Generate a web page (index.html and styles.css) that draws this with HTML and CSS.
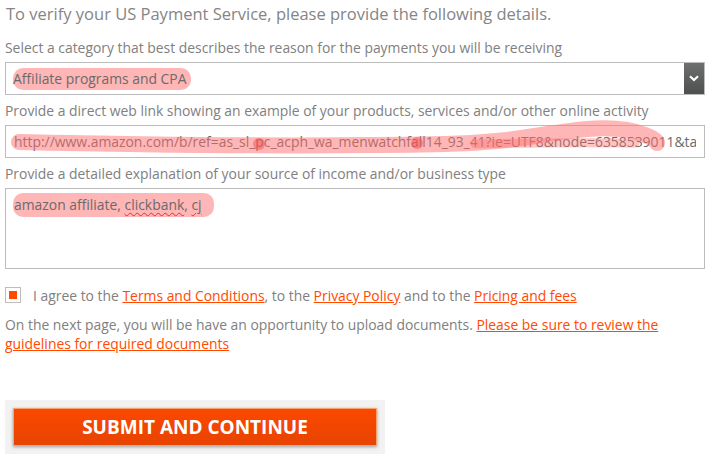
FILE: index.html
```html
<!DOCTYPE html>
<html>
<head>
<meta charset="utf-8">
<link rel="stylesheet" href="styles.css">
</head>
<body>
<div class="page">
  <h1 class="title">To verify your US Payment Service, please provide the following details.</h1>

  <div class="label l1">Select a category that best describes the reason for the payments you will be receiving</div>
  <div class="field select">
    <span class="value"><span class="mark">Affiliate programs and CPA</span></span>
    <span class="arrow">
      <svg width="10" height="7" viewBox="0 0 10 7"><path d="M1 1.2 L5 5 L9 1.2" fill="none" stroke="#fff" stroke-width="2.2"/></svg>
    </span>
  </div>

  <div class="label l2">Provide a direct web link showing an example of your products, services and/or other online activity</div>
  <div class="field url">
    <span class="clip"><span class="value">http://www.amazon.com/b/ref=as_sl_pc_acph_wa_menwatchfall14_93_41?ie=UTF8&amp;node=6358539011&amp;ta</span></span>
    <svg class="scribble" width="700" height="44" viewBox="0 -10 700 44">
      <path d="M14 17 C 150 20, 300 22, 440 19 C 500 18, 530 10, 565 6 C 600 1, 625 4, 640 10 C 648 13, 652 16, 652 18" fill="none" stroke="rgba(255,110,110,0.5)" stroke-width="16" stroke-linecap="round"/>
      <path d="M470 19 C 520 18, 560 17, 630 18" fill="none" stroke="rgba(255,110,110,0.4)" stroke-width="9" stroke-linecap="round"/>
      <circle cx="254" cy="19" r="6" fill="rgba(240,70,70,0.45)"/>
      <circle cx="412" cy="18" r="6" fill="rgba(240,70,70,0.45)"/>
    </svg>
  </div>

  <div class="label l3">Provide a detailed explanation of your source of income and/or business type</div>
  <div class="field area">
    <span class="value"><span class="mark mark2">amazon affiliate, <span class="spell">clickbank</span>, <span class="spell">cj</span></span></span>
  </div>

  <div class="agree">
    <span class="check"><span class="tick"></span></span>
    <span class="agree-text">I agree to the <a>Terms and Conditions</a>, to the <a>Privacy Policy</a> and to the <a>Pricing and fees</a></span>
  </div>

  <p class="note">On the next page, you will be have an opportunity to upload documents. <a>Please be sure to review the guidelines for required documents</a></p>

  <div class="btn-wrap">
    <div class="btn">SUBMIT AND CONTINUE</div>
  </div>
</div>
</body>
</html>
```

FILE: styles.css
```css
html, body {
  margin: 0;
  padding: 0;
  background: #fff;
}
body {
  font-family: "Open Sans", "DejaVu Sans", sans-serif;
  color: #808080;
}
.page {
  padding: 0 11px 0 5px;
  width: 700px;
}
.title {
  margin: 2px 0 0 1px;
  font-size: 16.5px;
  font-weight: 400;
  line-height: 24px;
  color: #858585;
}
.label {
  font-size: 13.9px;
  line-height: 20px;
  color: #808080;
}
.l1 { margin-top: 12px; }
.l2, .l3 { margin-top: 6px; }
.field {
  margin-top: 4px;
  box-sizing: border-box;
  border: 1px solid #bcbcbc;
  background: #fff;
  font-size: 13.9px;
  color: #6a6a6a;
  position: relative;
  overflow: hidden;
}
.select {
  height: 33px;
  display: flex;
  align-items: center;
  padding-left: 8px;
}
.select .value { flex: 1; white-space: nowrap; }
.arrow {
  width: 20px;
  align-self: stretch;
  background: linear-gradient(#6e7070, #4e5050);
  display: flex;
  align-items: center;
  justify-content: center;
}
.url {
  height: 33px;
  display: flex;
  align-items: center;
  padding: 0 8px;
  white-space: nowrap;
  overflow: visible;
}
.clip {
  display: block;
  flex: 1;
  overflow: hidden;
}
.scribble {
  position: absolute;
  left: -1px;
  top: -11px;
  pointer-events: none;
}
.area {
  height: 81px;
  padding: 6px 8px;
  line-height: 20px;
}
.mark {
  background: rgba(255, 110, 110, 0.5);
  border-radius: 10px;
  padding: 1px 4px 2px 0;
  margin-left: -1px;
}
.mark2 {
  padding: 2px 12px 3px 1px;
}
.spell {
  text-decoration: underline wavy #e03030;
  text-decoration-thickness: 1px;
  text-underline-offset: 2px;
}
.agree {
  margin-top: 16px;
  display: flex;
  align-items: center;
  height: 20px;
  font-size: 13.9px;
}
.check {
  width: 16px;
  height: 16px;
  box-sizing: border-box;
  border: 1px solid #bdbdbd;
  display: flex;
  align-items: center;
  justify-content: center;
  margin-right: 12px;
  background: #fff;
}
.tick {
  width: 8px;
  height: 8px;
  background: #ff4a00;
}
a {
  color: #ff4a00;
  text-decoration: underline;
  text-decoration-color: #ff4a00;
}
.note {
  margin: 10px 0 0 0;
  font-size: 13.9px;
  line-height: 19px;
  width: 680px;
}
.btn-wrap {
  margin-top: 47px;
  width: 380px;
  box-sizing: border-box;
  padding: 8px;
  background: #f2f2f2;
}
.btn {
  height: 38px;
  box-sizing: border-box;
  border: 1px solid #f7a46e;
  background: linear-gradient(#fb4800, #e84400);
  box-shadow: 0 1px 3px rgba(0,0,0,0.35);
  color: #fff;
  font-weight: 700;
  font-size: 19px;
  display: flex;
  align-items: center;
  justify-content: center;
  letter-spacing: 0;
}
```
